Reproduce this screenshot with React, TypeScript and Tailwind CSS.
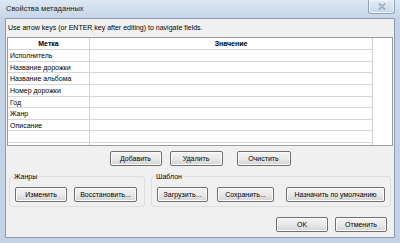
import React from 'react';

const font = { fontFamily: '"Liberation Sans", Arial, sans-serif' };

const Btn = ({ label, className = '' }: { label: string; className?: string }) => (
  <button
    type="button"
    className={`h-[15px] rounded-[2px] border border-[#707070] bg-linear-to-b from-[#f3f3f3] via-[#e9e9e9] to-[#d4d4d4] shadow-[inset_0_0_0_1px_#fbfbfb] text-[7px] leading-none text-black flex items-center justify-center ${className}`}
  >
    {label}
  </button>
);

const rows = [
  'Исполнитель',
  'Название дорожки',
  'Название альбома',
  'Номер дорожки',
  'Год',
  'Жанр',
  'Описание',
  '',
];

const App = () => {
  return (
    <div
      className="w-[400px] h-[243px] bg-[#c3d3e5] flex flex-col overflow-hidden"
      style={font}
    >
      {/* title bar */}
      <div className="h-[18px] flex items-start bg-linear-to-b from-[#dde8f4] to-[#c6d5e7]">
        <div className="pl-[6px] pt-[5px] text-[7.5px] leading-none text-[#1c1c1c]">
          Свойства метаданных
        </div>
        <div className="ml-auto mr-[5px] w-[27px] h-[14px] rounded-b-[3px] border border-t-0 border-[#8ea3bc] bg-linear-to-b from-[#e6eef7] to-[#c9d7e7] shadow-[inset_0_0_0_1px_#eef4fa] flex items-center justify-center">
          <svg width="8" height="7" viewBox="0 0 8 7">
            <path d="M1 0.5 L7 6.5 M7 0.5 L1 6.5" stroke="#6e7f95" strokeWidth="1.6" />
            <path d="M1 0.5 L7 6.5 M7 0.5 L1 6.5" stroke="#f7fafd" strokeWidth="0.7" />
          </svg>
        </div>
      </div>

      {/* client area */}
      <div className="mx-[5px] mb-[5px] flex-1 border border-[#8b9db3] bg-[#f0f0f0] flex flex-col text-black">
        <div className="pl-[2px] mt-[4px] h-[9px] text-[7px] leading-[9px]">
          Use arrow keys (or ENTER key after editing) to navigate fields.
        </div>

        {/* grid */}
        <div className="mx-[1px] mt-[5px] h-[109px] border border-[#9c9c9c] bg-white flex">
          <div className="w-[365px] border-r border-[#d0d0d0] flex flex-col">
            <div className="h-[12px] flex border-b border-[#d4d4d4] text-[7px] font-bold leading-[11px]">
              <div className="w-[82px] border-r border-[#d4d4d4] text-center">Метка</div>
              <div className="flex-1 text-center">Значение</div>
            </div>
            {rows.map((r, i) => (
              <div key={i} className="h-[11.65px] flex border-b border-[#d6d6d6] text-[7px] leading-[11px]">
                <div className="w-[82px] border-r border-[#d4d4d4] pl-[2px]">{r}</div>
                <div className="flex-1" />
              </div>
            ))}
            <div className="flex-1 flex">
              <div className="w-[82px] border-r border-[#d4d4d4]" />
            </div>
          </div>
        </div>

        {/* add / remove / clear */}
        <div className="mt-[5px] flex justify-center">
          <Btn label="Добавить" className="w-[52px]" />
          <Btn label="Удалить" className="w-[53px] ml-[8px]" />
          <Btn label="Очистить" className="w-[54px] ml-[14px]" />
        </div>

        {/* group boxes */}
        <div className="mt-[6px] flex gap-[6px] px-[3px]">
          <fieldset className="w-[136px] h-[35px] border border-[#dadfe3] rounded-[3px] px-[5px]">
            <legend className="text-[7px] leading-[9px] px-[1px] ml-[-2px]">Жанры</legend>
            <div className="mt-[6px] flex gap-[7px]">
              <Btn label="Изменить" className="w-[52px]" />
              <Btn label="Восстановить..." className="w-[63px]" />
            </div>
          </fieldset>
          <fieldset className="flex-1 h-[35px] border border-[#dadfe3] rounded-[3px] px-[5px]">
            <legend className="text-[7px] leading-[9px] px-[1px] ml-[-2px]">Шаблон</legend>
            <div className="mt-[6px] flex">
              <Btn label="Загрузить..." className="w-[51px]" />
              <Btn label="Сохранить..." className="w-[57px] ml-[9px]" />
              <Btn label="Назначить по умолчанию" className="w-[99px] ml-[12px]" />
            </div>
          </fieldset>
        </div>

        {/* ok / cancel */}
        <div className="mt-[10px] flex justify-end pr-[7px] gap-[7px]">
          <Btn label="OK" className="w-[52px]" />
          <Btn label="Отменить" className="w-[52px]" />
        </div>
      </div>
    </div>
  );
};

export default App;
